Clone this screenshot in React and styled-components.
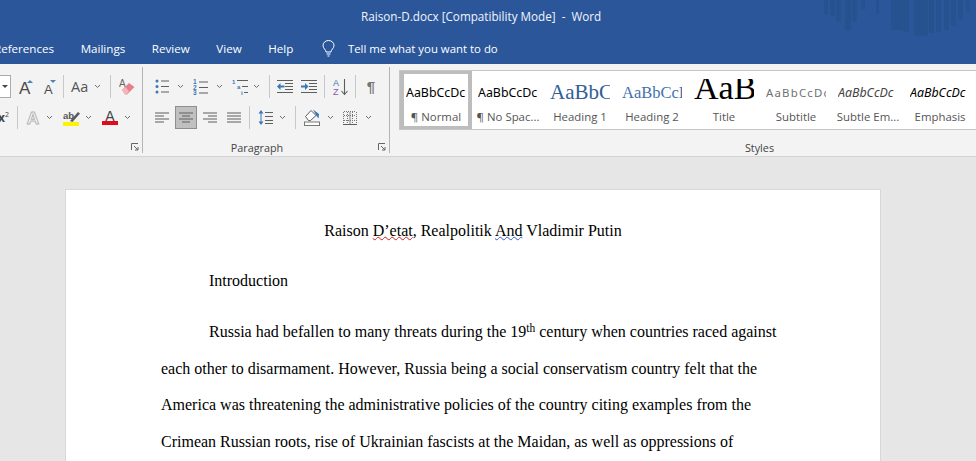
import styled, { createGlobalStyle } from "styled-components"

const Global = createGlobalStyle`
  html, body {
    margin: 0;
    width: 976px;
    height: 461px;
    overflow: hidden;
    background: #e6e6e6;
  }
  * { box-sizing: border-box; }
  svg { overflow: visible; }
`

const Window = styled.div`
  width: 976px;
  height: 461px;
  overflow: hidden;
  font-family: "Open Sans", "Noto Sans", sans-serif;
`

const Header = styled.div`
  position: relative;
  height: 64px;
  background: #2b579a;
  color: #fff;
  overflow: hidden;
`

const Backdrop = styled.svg`
  position: absolute;
  top: 0;
  right: 0;
`

const Title = styled.div`
  position: relative;
  height: 32px;
  line-height: 32px;
  padding-left: 361px;
  font-size: 11.7px;
  white-space: pre;
  color: #f0f4fa;
`

const Tabs = styled.div`
  position: relative;
  display: flex;
  align-items: center;
  gap: 26.6px;
  height: 32px;
  margin-left: -6px;
  font-size: 11.6px;
  white-space: nowrap;
`

const Tell = styled.div`
  display: flex;
  align-items: center;
  gap: 13px;
  margin-left: 2px;
  font-size: 11.4px;
`

const Ribbon = styled.div`
  display: flex;
  height: 93px;
  background: #f3f3f3;
  border-bottom: 1px solid #d4d4d4;
  overflow: hidden;
`

const Group = styled.div`
  position: relative;
  flex: 0 0 ${p => p.$w}px;
  padding-top: ${p => p.$pt || 11}px;
  padding-left: ${p => p.$pl || 0}px;
  overflow: hidden;
`

const Divider = styled.div`
  flex: 0 0 1px;
  height: 86px;
  margin-top: 3px;
  background: #b4b4b4;
`

const Row = styled.div`
  display: flex;
  align-items: center;
  height: 23px;
  margin-bottom: 8px;
`

const Tool = styled.div`
  display: flex;
  align-items: center;
  justify-content: center;
  flex: 0 0 ${p => p.$w}px;
  height: 23px;
  margin-left: ${p => p.$ml || 0}px;
  color: #444;
  background: ${p => (p.$active ? "#c0c0c0" : "transparent")};
  outline: ${p => (p.$active ? "1px solid #8e8e8e" : "none")};
  outline-offset: -1px;
`

const Sep = styled.div`
  flex: 0 0 1px;
  height: 23px;
  margin-left: ${p => p.$ml || 0}px;
  background: #c8c8c8;
`

const SizeBox = styled.div`
  display: flex;
  align-items: center;
  flex: 0 0 11px;
  height: 23px;
  padding-left: 2px;
  background: #fff;
  border: 1px solid #ababab;
  border-left: none;
`

const Caret = styled.div`
  width: 0;
  height: 0;
  border-left: 3px solid transparent;
  border-right: 3px solid transparent;
  border-top: 3px solid #444;
`

const CaseLabel = styled.span`
  font-size: 14.5px;
  color: #555;
`

const PowerLabel = styled.span`
  font-size: 12px;
  font-weight: 700;
  color: #444;
  margin-left: -2px;
  white-space: nowrap;

  sup {
    font-size: 7px;
    font-weight: 400;
    vertical-align: 5px;
    line-height: 0;
  }
`

const Pilcrow = styled.span`
  font-family: "Liberation Sans", sans-serif;
  font-size: 15px;
  font-weight: 700;
  color: #757575;
  line-height: 1;
`

const GroupLabel = styled.div`
  position: absolute;
  left: 0;
  right: ${p => p.$r || 0}px;
  top: 76px;
  text-align: center;
  font-size: 10.8px;
  line-height: 16px;
  color: #444;
`

const Launcher = styled.svg`
  position: absolute;
  right: 3px;
  top: 79px;
`

const Gallery = styled.div`
  display: flex;
  height: 60px;
  margin-left: 9px;
  background: #fff;
  border: 1px solid #c6c6c6;
  border-right: none;
  overflow: hidden;
`

const StyleTile = styled.div`
  flex: 0 0 72px;
  display: flex;
  flex-direction: column;
  align-items: center;
  height: 58px;
  border: ${p => (p.$selected ? "solid #bdbdbd" : "none")};
  border-width: ${p => (p.$selected ? "3px 4px" : "0")};
  padding-top: ${p => (p.$selected ? 0 : 3)}px;
`

const Preview = styled.div`
  width: 60px;
  height: ${p => 34 - (p.$top || 0)}px;
  margin-top: ${p => p.$top || 0}px;
  line-height: ${p => p.$lh || 37}px;
  overflow: hidden;
  white-space: nowrap;
  font-family: ${p => (p.$serif ? '"Liberation Serif", serif' : '"Noto Sans", sans-serif')};
  font-size: ${p => p.$size}px;
  font-style: ${p => (p.$italic ? "italic" : "normal")};
  letter-spacing: ${p => p.$ls || 0}px;
  color: ${p => p.$color || "#000"};
`

const StyleName = styled.div`
  font-size: 11.4px;
  line-height: 17px;
  color: #555;
  white-space: nowrap;
`

const Doc = styled.div`
  flex: 1;
  padding: 33px 0 0 66px;
`

const Page = styled.div`
  width: 814px;
  height: 400px;
  padding: 23px 95px 0;
  background: #fff;
  box-shadow: 0 0 0 1px #d8d8d8;
  font-family: "Liberation Serif", "Times New Roman", serif;
  font-size: 16px;
  color: #000;
`

const Line = styled.div`
  height: 36.5px;
  line-height: 36.5px;
  white-space: nowrap;
  margin-top: ${p => p.$mt || 0}px;
  padding-left: ${p => (p.$indent ? 48 : 0)}px;
  text-align: ${p => (p.$center ? "center" : "left")};

  sup {
    font-size: 11.5px;
    line-height: 0;
    vertical-align: 5px;
  }
`

const Squiggle = styled.span`
  text-decoration: underline wavy ${p => p.$color};
  text-decoration-thickness: 1px;
  text-underline-offset: 0;
`

const G = "#5e5e5e"
const B = "#3a78b5"

const Chevron = () => (
  <svg width="7" height="5" viewBox="0 0 7 5">
    <path d="M1 1 3.5 3.5 6 1" fill="none" stroke="#6e6e6e" strokeWidth="1" />
  </svg>
)

const Lines = ({ rows }) => (
  <svg width="14" height="12" viewBox="0 0 14 12">
    {rows.map(([x1, x2], i) => (
      <rect key={i} x={x1} y={i * 3 + 0.5} width={x2 - x1} height="1" fill={G} />
    ))}
  </svg>
)

const Launch = () => (
  <Launcher width="8" height="8" viewBox="0 0 8 8">
    <path d="M.5 7V.5H7M3 3 7 7M7 4V7H4" fill="none" stroke="#666" />
  </Launcher>
)

const Bullets = () => (
  <svg width="14" height="15" viewBox="0 0 14 15">
    {[2, 7.5, 13].map(y => (
      <g key={y}>
        <circle cx="2" cy={y} r="1.5" fill={B} />
        <rect x="6" y={y - 0.5} width="8" height="1" fill={G} />
      </g>
    ))}
  </svg>
)

const Numbering = () => (
  <svg width="15" height="16" viewBox="0 0 15 16">
    {["1", "2", "3"].map((n, i) => (
      <g key={n}>
        <text x="0" y={5 + i * 5.5} fontSize="6.5" fontWeight="700" fill={B} fontFamily="Liberation Sans">{n}</text>
        <rect x="6" y={2.5 + i * 5.5} width="9" height="1" fill={G} />
      </g>
    ))}
  </svg>
)

const Multilevel = () => (
  <svg width="16" height="17" viewBox="0 0 16 17">
    <text x="0" y="6" fontSize="6" fontWeight="700" fill={B} fontFamily="Liberation Sans">1</text>
    <rect x="5" y="2" width="11" height="1" fill={G} />
    <text x="5" y="11" fontSize="6" fontWeight="700" fill={B} fontFamily="Liberation Sans">a</text>
    <rect x="10" y="8" width="6" height="1" fill={G} />
    <text x="9" y="17" fontSize="6" fontWeight="700" fill={B} fontFamily="Liberation Sans">i</text>
    <rect x="12" y="14" width="4" height="1" fill={G} />
  </svg>
)

const Indent = ({ flip }) => (
  <svg width="16" height="13" viewBox="0 0 16 13">
    <rect x="0" y="0" width="16" height="1" fill={G} />
    <rect x="8" y="3" width="8" height="1" fill={G} />
    <rect x="8" y="6" width="8" height="1" fill={G} />
    <rect x="8" y="9" width="8" height="1" fill={G} />
    <rect x="0" y="12" width="16" height="1" fill={G} />
    <path
      d={flip ? "M0 5.5H4V3L7.5 6.5 4 10V7.5H0Z" : "M7.5 5.5H3.5V3L0 6.5 3.5 10V7.5H7.5Z"}
      fill={B}
    />
  </svg>
)

const Sort = () => (
  <svg width="16" height="18" viewBox="0 0 16 18">
    <text x="0" y="8" fontSize="9" fill={B} fontFamily="Liberation Sans">A</text>
    <text x="0" y="17" fontSize="9" fill="#8a5aa8" fontFamily="Liberation Sans">Z</text>
    <path d="M11.5 1V16M8.5 13 11.5 16.5 14.5 13" fill="none" stroke={G} strokeWidth="1.1" />
  </svg>
)

const LineSpacing = () => (
  <svg width="15" height="17" viewBox="0 0 15 17">
    <path d="M3 1 .5 4.5H5.5ZM3 16 .5 12.5H5.5Z" fill={B} />
    <rect x="2.5" y="4" width="1" height="9" fill={B} />
    {[3, 7, 11, 14].map(y => (
      <rect key={y} x="7" y={y} width="8" height="1" fill={G} />
    ))}
  </svg>
)

const Shading = () => (
  <svg width="16" height="17" viewBox="0 0 16 17">
    <path d="M1.5 7.5 7 1.5 12 6.5 6.5 11.5H4.5Z" fill="#fff" stroke={G} strokeWidth="1" />
    <path d="M9 .5 15 5 14.5 9.5 12.5 7Z" fill={B} />
    <rect x="0.5" y="13" width="15" height="3.5" fill="#fff" stroke="#777" strokeWidth="1" />
  </svg>
)

const Borders = () => (
  <svg width="14" height="14" viewBox="0 0 14 14">
    <path d="M.5 1V13M4.5 1V13M9.5 1V13M13.5 1V13M1 .5H13M1 4.5H13M1 9.5H13" fill="none" stroke="#777" strokeWidth="1" strokeDasharray="1 1" />
    <rect x="0" y="13" width="14" height="1" fill={G} />
    <rect x="6.5" y="1" width="1" height="12" fill="#888" />
  </svg>
)

const GrowA = ({ size, down, w }) => (
  <svg width={w} height="17" viewBox={`0 0 ${w} 17`}>
    <text x="0" y="16" fontSize={size} fill="#4a4a4a" fontFamily="Liberation Sans">A</text>
    <path d={down ? `M${w - 6} 2H${w}L${w - 3} 5Z` : `M${w - 6} 5H${w}L${w - 3} 2Z`} fill="#4e82b5" />
  </svg>
)

const Eraser = () => (
  <svg width="16" height="17" viewBox="0 0 16 17">
    <text x="0" y="9" fontSize="10" fill="#666" fontFamily="Liberation Sans">A</text>
    <path d="M3 12 10 5 15.5 9 8 16.5H6Z" fill="#e8808c" />
    <path d="M3 12 6 9 10 13 7.5 16.5H6Z" fill="#f4b6bc" />
  </svg>
)

const GlowA = () => (
  <svg width="14" height="15" viewBox="0 0 14 15">
    <text x="7" y="14" textAnchor="middle" fontSize="17" fontWeight="700" fill="#fff" stroke="#b4b4b4" strokeWidth="1" fontFamily="Liberation Sans">A</text>
  </svg>
)

const Highlight = () => (
  <svg width="17" height="16" viewBox="0 0 17 16">
    <text x="0" y="9" fontSize="9.5" fontWeight="700" fill="#555" fontFamily="Liberation Sans">ab</text>
    <path d="M7 11 15 2 17 3.5 9.5 12Z" fill="#5a5a5a" />
    <rect x="0" y="12" width="16" height="4" fill="#fff200" />
  </svg>
)

const FontColor = () => (
  <svg width="16" height="15" viewBox="0 0 16 15">
    <text x="8" y="11" textAnchor="middle" fontSize="14" fill="#444" fontFamily="Liberation Sans">A</text>
    <rect x="0" y="11" width="16" height="4" fill="#e00b1c" />
  </svg>
)

const Bulb = () => (
  <svg width="13" height="17" viewBox="0 0 13 17" fill="none" stroke="#fff" strokeWidth="1">
    <path d="M4 12C4 9.5 1 8.5 1 5.5A5.5 5 0 0 1 12 5.5C12 8.5 9 9.5 9 12Z" />
    <path d="M4.5 14H8.5M5.5 16H7.5" />
  </svg>
)

const bars = [
  [44, 4, 15], [50, 5, 16], [56, 5, 22], [65, 6, 31], [72, 5, 22], [81, 4, 10],
  [96, 3, 14], [111, 12, 30], [123, 6, 32], [134, 14, 36], [149, 5, 33], [156, 5, 32],
  [164, 5, 30], [171, 5, 26], [178, 5, 20], [186, 4, 12],
]

const styleTiles = [
  { name: "¶ Normal", text: "AaBbCcDc", selected: true, size: 12.4 },
  { name: "¶ No Spac...", text: "AaBbCcDc", size: 12.4 },
  { name: "Heading 1", text: "AaBbC", size: 21, serif: true, color: "#2f6096", lh: 36 },
  { name: "Heading 2", text: "AaBbCcI", size: 16.5, serif: true, color: "#3f72ad" },
  { name: "Title", text: "AaB", size: 34, serif: true, top: 5, lh: 17 },
  { name: "Subtitle", text: "AaBbCcDc", size: 11.4, ls: 1.2, color: "#707070" },
  { name: "Subtle Em...", text: "AaBbCcDc", size: 12.4, italic: true, color: "#444" },
  { name: "Emphasis", text: "AaBbCcDc", size: 12.4, italic: true },
]

const App = () => (
  <Window>
    <Global />
    <Header>
      <Backdrop width="196" height="40" viewBox="0 0 196 40">
        {bars.map(([x, w, h]) => (
          <rect key={x} x={x} y="0" width={w} height={h} fill="#275290" />
        ))}
      </Backdrop>
      <Title>Raison-D.docx [Compatibility Mode]  -  Word</Title>
      <Tabs>
        <span>References</span>
        <span>Mailings</span>
        <span>Review</span>
        <span>View</span>
        <span>Help</span>
        <Tell>
          <Bulb />
          <span>Tell me what you want to do</span>
        </Tell>
      </Tabs>
    </Header>

    <Ribbon>
      <Group $w={142}>
        <Row>
          <SizeBox><Caret /></SizeBox>
          <Tool $w={14} $ml={8}><GrowA size={17} w={14} /></Tool>
          <Tool $w={12} $ml={11}><GrowA size={13} w={12} down /></Tool>
          <Sep $ml={7} />
          <Tool $w={15} $ml={7}><CaseLabel>Aa</CaseLabel></Tool>
          <Tool $w={7} $ml={6}><Chevron /></Tool>
          <Sep $ml={9} />
          <Tool $w={16} $ml={8}><Eraser /></Tool>
        </Row>
        <Row>
          <Tool $w={8}><PowerLabel>x<sup>2</sup></PowerLabel></Tool>
          <Sep $ml={8} />
          <Tool $w={14} $ml={8}><GlowA /></Tool>
          <Tool $w={7} $ml={6}><Chevron /></Tool>
          <Tool $w={17} $ml={10}><Highlight /></Tool>
          <Tool $w={7} $ml={5}><Chevron /></Tool>
          <Tool $w={16} $ml={10}><FontColor /></Tool>
          <Tool $w={7} $ml={6}><Chevron /></Tool>
        </Row>
        <Launch />
      </Group>
      <Divider />

      <Group $w={246} $pl={12}>
        <Row>
          <Tool $w={14}><Bullets /></Tool>
          <Tool $w={7} $ml={8}><Chevron /></Tool>
          <Tool $w={15} $ml={9}><Numbering /></Tool>
          <Tool $w={7} $ml={8}><Chevron /></Tool>
          <Tool $w={16} $ml={9}><Multilevel /></Tool>
          <Tool $w={7} $ml={5}><Chevron /></Tool>
          <Sep $ml={9} />
          <Tool $w={16} $ml={7}><Indent /></Tool>
          <Tool $w={16} $ml={8}><Indent flip /></Tool>
          <Sep $ml={7} />
          <Tool $w={16} $ml={8}><Sort /></Tool>
          <Sep $ml={6} />
          <Tool $w={10} $ml={10}><Pilcrow>¶</Pilcrow></Tool>
        </Row>
        <Row>
          <Tool $w={14}><Lines rows={[[0, 14], [0, 9], [0, 14], [0, 9]]} /></Tool>
          <Tool $w={22} $ml={6} $active><Lines rows={[[0, 14], [3, 11], [0, 14], [3, 11]]} /></Tool>
          <Tool $w={14} $ml={6}><Lines rows={[[0, 14], [5, 14], [0, 14], [5, 14]]} /></Tool>
          <Tool $w={14} $ml={10}><Lines rows={[[0, 14], [0, 14], [0, 14], [0, 14]]} /></Tool>
          <Sep $ml={8} />
          <Tool $w={15} $ml={8}><LineSpacing /></Tool>
          <Tool $w={7} $ml={6}><Chevron /></Tool>
          <Sep $ml={9} />
          <Tool $w={16} $ml={8}><Shading /></Tool>
          <Tool $w={7} $ml={7}><Chevron /></Tool>
          <Tool $w={14} $ml={9}><Borders /></Tool>
          <Tool $w={7} $ml={8}><Chevron /></Tool>
        </Row>
        <GroupLabel $r={18}>Paragraph</GroupLabel>
        <Launch />
      </Group>
      <Divider />

      <Group $w={739} $pt={6}>
        <Gallery>
          {styleTiles.map(t => (
            <StyleTile key={t.name} $selected={t.selected}>
              <Preview
                $size={t.size}
                $serif={t.serif}
                $italic={t.italic}
                $ls={t.ls}
                $color={t.color}
                $lh={t.lh}
                $top={t.top}
              >
                {t.text}
              </Preview>
              <StyleName>{t.name}</StyleName>
            </StyleTile>
          ))}
        </Gallery>
        <GroupLabel>Styles</GroupLabel>
      </Group>
    </Ribbon>

    <Doc>
      <Page>
        <Line $center>
          Raison <Squiggle $color="#d02020">D’etat</Squiggle>, Realpolitik <Squiggle $color="#2f5fd0">And</Squiggle> Vladimir Putin
        </Line>
        <Line $indent $mt={13.5}>Introduction</Line>
        <Line $indent $mt={14.5}>
          Russia had befallen to many threats during the 19<sup>th</sup> century when countries raced against
        </Line>
        <Line>each other to disarmament. However, Russia being a social conservatism country felt that the</Line>
        <Line>America was threatening the administrative policies of the country citing examples from the</Line>
        <Line>Crimean Russian roots, rise of Ukrainian fascists at the Maidan, as well as oppressions of</Line>
      </Page>
    </Doc>
  </Window>
)

export default App
